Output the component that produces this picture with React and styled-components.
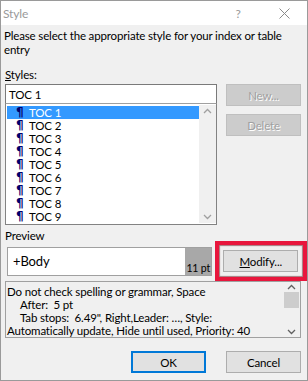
import React from "react";
import styled, { createGlobalStyle } from "styled-components";

const Global = createGlobalStyle`
  html, body { margin: 0; padding: 0; background: #f0f0f0; }
  body { font-family: Lato, "Liberation Sans", sans-serif; font-size: 11.5px; letter-spacing: -0.15px; color: #000; }
`;

const Dialog = styled.div`
  width: 308px;
  height: 381px;
  box-sizing: border-box;
  border: 1px solid #9a9a9a;
  background: #f0f0f0;
  display: flex;
  flex-direction: column;
`;

const TitleBar = styled.div`
  height: 24px;
  background: #fff;
  display: flex;
  align-items: center;
  padding-left: 2px;
  color: #9a9a9a;
  font-size: 12px;
`;

const Title = styled.span`
  flex: 1;
`;

const TitleBtn = styled.span`
  width: 46px;
  display: flex;
  justify-content: center;
  align-items: center;
  color: #9a9a9a;
`;

const Body = styled.div`
  flex: 1;
  padding: 4px 0 0 3px;
  display: flex;
  flex-direction: column;
`;

const Text = styled.div`
  line-height: 14px;
  padding-right: 4px;
`;

const Label = styled.div`
  line-height: 14px;
  margin-top: ${(p) => p.$mt || 0}px;
  padding-left: ${(p) => p.$pl || 0}px;
`;

const U = styled.span`
  text-decoration: underline;
`;

const StylesRow = styled.div`
  display: flex;
  margin-top: 2px;
  padding-left: 1px;
`;

const LeftCol = styled.div`
  width: 212px;
  display: flex;
  flex-direction: column;
`;

const Input = styled.div`
  height: 20px;
  box-sizing: border-box;
  border: 1px solid #7a7a7a;
  border-bottom-color: #a0a0a0;
  background: #fff;
  padding-left: 3px;
  display: flex;
  align-items: center;
`;

const List = styled.div`
  height: 121px;
  box-sizing: border-box;
  border: 1px solid #828282;
  border-top: none;
  background: #fff;
  display: flex;
  padding: 2px 0 1px 1px;
`;

const Rows = styled.div`
  flex: 1;
  display: flex;
  flex-direction: column;
`;

const Row = styled.div`
  height: 13px;
  line-height: 13px;
  display: flex;
  align-items: center;
  overflow: hidden;
  background: ${(p) => (p.$sel ? "#3399ff" : "transparent")};
  color: ${(p) => (p.$sel ? "#fff" : "#000")};
`;

const Pilcrow = styled.span`
  width: 13px;
  margin-left: 9px;
  font-weight: bold;
  font-size: 12px;
  line-height: 13px;
  color: #00006e;
  font-family: "DejaVu Sans", "Liberation Sans", sans-serif;
`;

const ScrollBar = styled.div`
  width: 17px;
  background: #f0f0f0;
  display: flex;
  flex-direction: column;
  justify-content: space-between;
  align-items: center;
  padding: 3px 0;
  margin-top: -1px;
  color: #a0a0a0;
`;

const SideButtons = styled.div`
  display: flex;
  flex-direction: column;
  gap: 8px;
  margin-left: 9px;
`;

const DisabledBtn = styled.div`
  width: 75px;
  height: 22px;
  box-sizing: border-box;
  background: #cccccc;
  border: 1px solid #bfbfbf;
  color: #a0a0a0;
  text-shadow: 1px 1px 0 #fff;
  display: flex;
  align-items: center;
  justify-content: center;
`;

const PreviewRow = styled.div`
  display: flex;
  align-items: center;
  margin-top: -2px;
  margin-left: 3px;
`;

const PreviewBox = styled.div`
  width: 206px;
  height: 29px;
  box-sizing: border-box;
  border: 1px solid #a0a0a0;
  background: #fff;
  display: flex;
`;

const PreviewText = styled.div`
  flex: 1;
  padding-left: 5px;
  display: flex;
  align-items: center;
  font-size: 13px;
`;

const PtPanel = styled.div`
  width: 26px;
  background: #a8a8a8;
  font-size: 10.5px;
  white-space: nowrap;
  display: flex;
  align-items: flex-end;
  justify-content: center;
  padding-bottom: 1px;
`;

const Highlight = styled.div`
  margin-left: 3px;
  width: 92px;
  height: 40px;
  box-sizing: border-box;
  border: 4px solid #e8163c;
  box-shadow: inset 0 0 1px 1px rgba(90, 0, 10, 0.5);
  display: flex;
  align-items: center;
  padding-left: 4px;
`;

const Button = styled.div`
  width: 75px;
  height: 22px;
  box-sizing: border-box;
  background: #e1e1e1;
  border: ${(p) => (p.$default ? "2px solid #0078d7" : "1px solid #adadad")};
  display: flex;
  align-items: center;
  justify-content: center;
  color: #000;
`;

const DescBox = styled.div`
  margin-top: 0;
  margin-left: 1px;
  width: 296px;
  height: 57px;
  box-sizing: border-box;
  border: 1px solid #a0a0a0;
  background: #f0f0f0;
  display: flex;
`;

const DescText = styled.div`
  flex: 1;
  padding: 3px 0 0 1px;
  line-height: 13px;
  white-space: nowrap;
  overflow: hidden;
`;

const Indent = styled.div`
  padding-left: 13px;
`;

const DescScroll = styled.div`
  width: 17px;
  display: flex;
  flex-direction: column;
  align-items: center;
  padding: 2px 0;
  color: #606060;
`;

const Thumb = styled.div`
  width: 15px;
  height: 16px;
  background: #cdcdcd;
  margin: 2px 0 auto;
`;

const Footer = styled.div`
  display: flex;
  justify-content: flex-end;
  gap: 20px;
  margin-top: 13px;
  padding-right: 6px;
`;

const Chevron = ({ up }) => (
  <svg width="9" height="6" viewBox="0 0 9 6">
    <path
      d={up ? "M1 5 L4.5 1.5 L8 5" : "M1 1 L4.5 4.5 L8 1"}
      fill="none"
      stroke="currentColor"
      strokeWidth="1.3"
    />
  </svg>
);

const items = ["TOC 1", "TOC 2", "TOC 3", "TOC 4", "TOC 5", "TOC 6", "TOC 7", "TOC 8", "TOC 9"];

export default function App() {
  return (
    <>
      <Global />
      <Dialog>
        <TitleBar>
          <Title>Style</Title>
          <TitleBtn>?</TitleBtn>
          <TitleBtn>
            <svg width="11" height="11" viewBox="0 0 11 11">
              <path d="M0.5 0.5 L10.5 10.5 M10.5 0.5 L0.5 10.5" stroke="#8a8a8a" strokeWidth="1" />
            </svg>
          </TitleBtn>
        </TitleBar>
        <Body>
          <Text>Please select the appropriate style for your index or table entry</Text>
          <Label $mt={11} $pl={1}>
            <U>S</U>tyles:
          </Label>
          <StylesRow>
            <LeftCol>
              <Input>TOC 1</Input>
              <List>
                <Rows>
                  {items.map((it, i) => (
                    <Row key={it} $sel={i === 0}>
                      <Pilcrow>¶</Pilcrow>
                      <span>{it}</span>
                    </Row>
                  ))}
                </Rows>
                <ScrollBar>
                  <Chevron up />
                  <Chevron />
                </ScrollBar>
              </List>
            </LeftCol>
            <SideButtons>
              <DisabledBtn>New...</DisabledBtn>
              <DisabledBtn>Delete</DisabledBtn>
            </SideButtons>
          </StylesRow>
          <Label $mt={4} $pl={1}>Preview</Label>
          <PreviewRow>
            <PreviewBox>
              <PreviewText>+Body</PreviewText>
              <PtPanel>11 pt</PtPanel>
            </PreviewBox>
            <Highlight>
              <Button>
                <span>
                  <U>M</U>odify...
                </span>
              </Button>
            </Highlight>
          </PreviewRow>
          <DescBox>
            <DescText>
              <div>Do not check spelling or grammar, Space</div>
              <Indent>After:&nbsp; 5 pt</Indent>
              <Indent>Tab stops:&nbsp; 6.49", Right,Leader: …, Style:</Indent>
              <div>Automatically update, Hide until used, Priority: 40</div>
            </DescText>
            <DescScroll>
              <Chevron up />
              <Thumb />
              <Chevron />
            </DescScroll>
          </DescBox>
          <Footer>
            <Button $default>OK</Button>
            <Button>Cancel</Button>
          </Footer>
        </Body>
      </Dialog>
    </>
  );
}
